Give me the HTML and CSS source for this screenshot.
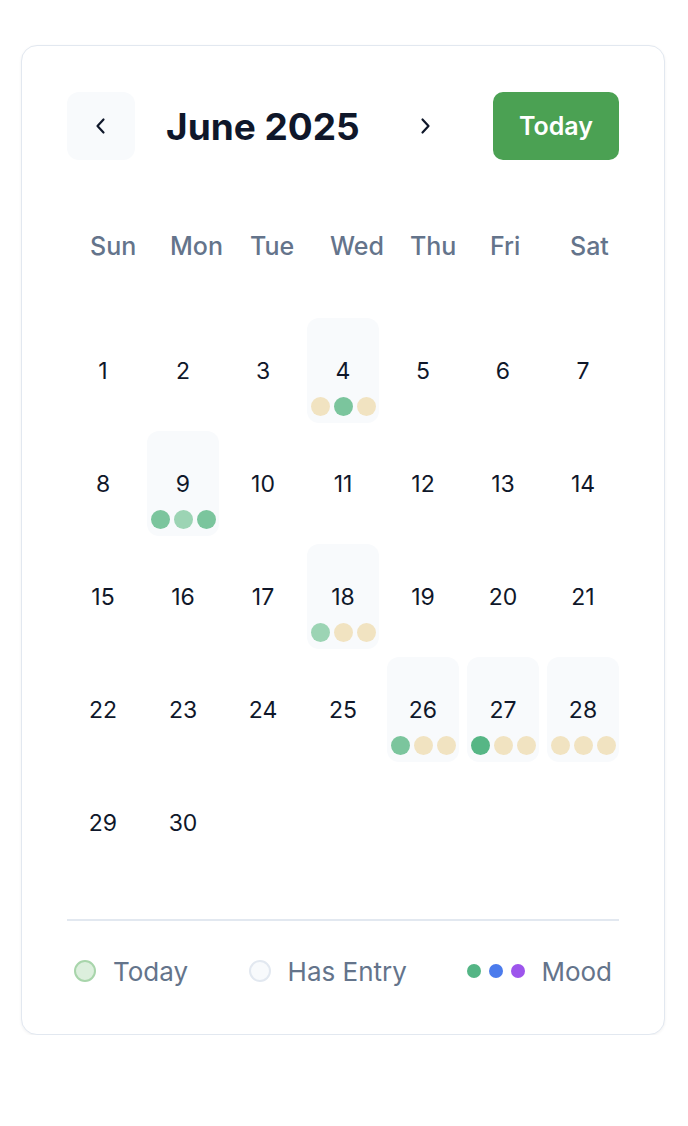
FILE: index.html
```html
<!DOCTYPE html>
<html lang="en">
<head>
<meta charset="utf-8">
<title>Calendar</title>
<link rel="stylesheet" href="styles.css">
</head>
<body>
<div class="page">
  <div class="card">
    <div class="header">
      <div class="nav">
        <button class="nav-btn prev" aria-label="Previous month">
          <svg width="24" height="24" viewBox="0 0 24 24"><path d="M14.5 5.5 L8.5 12 L14.5 18.5" fill="none" stroke="#0f172a" stroke-width="2.2" stroke-linecap="round" stroke-linejoin="round"/></svg>
        </button>
        <h1 class="title">June 2025</h1>
        <button class="nav-btn next" aria-label="Next month">
          <svg width="24" height="24" viewBox="0 0 24 24"><path d="M9.5 5.5 L15.5 12 L9.5 18.5" fill="none" stroke="#0f172a" stroke-width="2.2" stroke-linecap="round" stroke-linejoin="round"/></svg>
        </button>
      </div>
      <button class="today-btn">Today</button>
    </div>

    <div class="weekdays">
      <div class="wd">Sun</div><div class="wd">Mon</div><div class="wd">Tue</div><div class="wd">Wed</div><div class="wd">Thu</div><div class="wd">Fri</div><div class="wd">Sat</div>
    </div>

    <div class="days">
      <div class="day">1</div>
      <div class="day">2</div>
      <div class="day">3</div>
      <div class="day entry">4<div class="dots"><span class="dot beige"></span><span class="dot green"></span><span class="dot beige"></span></div></div>
      <div class="day">5</div>
      <div class="day">6</div>
      <div class="day">7</div>

      <div class="day">8</div>
      <div class="day entry">9<div class="dots"><span class="dot green"></span><span class="dot light"></span><span class="dot green"></span></div></div>
      <div class="day">10</div>
      <div class="day">11</div>
      <div class="day">12</div>
      <div class="day">13</div>
      <div class="day">14</div>

      <div class="day">15</div>
      <div class="day">16</div>
      <div class="day">17</div>
      <div class="day entry">18<div class="dots"><span class="dot light"></span><span class="dot beige"></span><span class="dot beige"></span></div></div>
      <div class="day">19</div>
      <div class="day">20</div>
      <div class="day">21</div>

      <div class="day">22</div>
      <div class="day">23</div>
      <div class="day">24</div>
      <div class="day">25</div>
      <div class="day entry">26<div class="dots"><span class="dot green"></span><span class="dot beige"></span><span class="dot beige"></span></div></div>
      <div class="day entry">27<div class="dots"><span class="dot dark"></span><span class="dot beige"></span><span class="dot beige"></span></div></div>
      <div class="day entry">28<div class="dots"><span class="dot beige"></span><span class="dot beige"></span><span class="dot beige"></span></div></div>

      <div class="day">29</div>
      <div class="day">30</div>
    </div>

    <div class="legend">
      <div class="legend-item"><span class="swatch swatch-today"></span>Today</div>
      <div class="legend-item"><span class="swatch swatch-entry"></span>Has Entry</div>
      <div class="legend-item"><span class="mood-dots"><span class="md md-green"></span><span class="md md-blue"></span><span class="md md-purple"></span></span>Mood</div>
    </div>
  </div>
</div>
</body>
</html>
```

FILE: styles.css
```css
* { box-sizing: border-box; }

html, body {
  margin: 0;
  padding: 0;
  background: #ffffff;
  font-family: Inter, "Noto Sans", "Liberation Sans", sans-serif;
  color: #0f172a;
}

.page {
  padding: 45px 0 0 21px;
}

.card {
  width: 644px;
  border: 1px solid #e2e8f0;
  border-radius: 16px;
  padding: 46px 45px 45px;
  background: #ffffff;
  box-shadow: 0 1px 3px rgba(15, 23, 42, 0.06);
}

.header {
  display: flex;
  align-items: center;
  justify-content: space-between;
  height: 68px;
}

.nav {
  display: flex;
  align-items: center;
  gap: 31px;
}

.nav-btn {
  width: 68px;
  height: 68px;
  border: none;
  border-radius: 12px;
  background: transparent;
  display: flex;
  align-items: center;
  justify-content: center;
  padding: 0;
}

.nav-btn.prev {
  background: #f8fafc;
}

.title {
  margin: 0;
  font-size: 37px;
  font-weight: 700;
  letter-spacing: 0;
  color: #0f172a;
}

.today-btn {
  width: 126px;
  height: 68px;
  border: none;
  border-radius: 10px;
  background: #4ba153;
  color: #ffffff;
  font-family: inherit;
  font-size: 25px;
  font-weight: 600;
}

.weekdays {
  display: grid;
  grid-template-columns: repeat(7, 72px);
  column-gap: 8px;
  margin-top: 70px;
  height: 33px;
  line-height: 33px;
}

.wd {
  padding-left: 23px;
  white-space: nowrap;
  font-size: 25px;
  font-weight: 500;
  color: #64748b;
}

.days {
  display: grid;
  grid-template-columns: repeat(7, 72px);
  grid-auto-rows: 105px;
  gap: 8px;
  margin-top: 55px;
}

.day {
  position: relative;
  display: flex;
  align-items: center;
  justify-content: center;
  border-radius: 12px;
  font-size: 23px;
  color: #0f172a;
}

.day.entry {
  background: #f8fafc;
}

.dots {
  position: absolute;
  left: 0;
  right: 0;
  bottom: 7px;
  display: flex;
  justify-content: center;
  gap: 4px;
}

.dot {
  width: 19px;
  height: 19px;
  border-radius: 50%;
}

.dot.beige { background: #f1e3c1; }
.dot.green { background: #7bc59d; }
.dot.light { background: #9cd4b4; }
.dot.dark { background: #56b685; }

.legend {
  margin-top: 44px;
  border-top: 2px solid #e2e8f0;
  padding: 32px 7px 0;
  display: flex;
  justify-content: space-between;
  align-items: center;
  height: 70px;
}

.legend-item {
  display: flex;
  align-items: center;
  font-size: 26px;
  color: #64748b;
}

.swatch {
  width: 22px;
  height: 22px;
  border-radius: 50%;
  margin-right: 17px;
}

.swatch-today {
  background: #dcefdd;
  border: 2px solid #a8d5ab;
}

.swatch-entry {
  background: #f8fafc;
  border: 2px solid #e2e8f0;
}

.mood-dots {
  display: flex;
  gap: 8px;
  margin-right: 16px;
}

.md {
  width: 14px;
  height: 14px;
  border-radius: 50%;
}

.md-green { background: #54b585; }
.md-blue { background: #4b7bec; }
.md-purple { background: #9d55ec; }
```
